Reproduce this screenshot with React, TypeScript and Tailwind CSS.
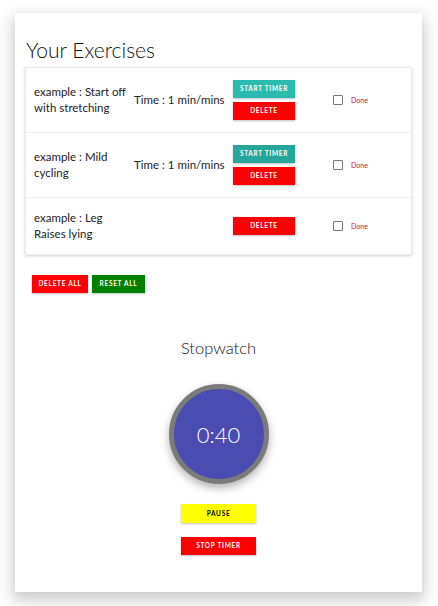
import React from "react";

const rows = [
  { name: ["example : Start off", "with stretching"], time: "Time : 1 min/mins", timer: true, h: "h-[65px]", teal: "bg-[#2bbbad]" },
  { name: ["example : Mild", "cycling"], time: "Time : 1 min/mins", timer: true, h: "h-[65px]", teal: "bg-[#26a69a]" },
  { name: ["example : Leg", "Raises lying"], time: "", timer: false, h: "h-[56px]", teal: "" },
];

const btn = "flex items-center justify-center text-white font-bold uppercase text-[6.5px] tracking-[0.7px] shadow-[0_1px_2px_rgba(0,0,0,0.25)]";

export default function App() {
  return (
    <div className="w-[438px] h-[606px] bg-white pt-[13px] px-[15px] [font-family:Lato,'Noto_Sans',sans-serif] text-[#222]">
      <div className="w-[407px] h-[579px] bg-white shadow-[0_6px_14px_2px_rgba(0,0,0,0.22)] px-[10px] flex flex-col">
        <h1 className="mt-[22px] ml-[1px] mb-[2px] text-[21px] leading-[30px] font-light text-[#111]">Your Exercises</h1>
        <div className="bg-white shadow-[0_1px_3px_rgba(0,0,0,0.18)] border border-[#ececec]">
          {rows.map((r, i) => (
            <div key={i} className={`${r.h} flex items-center pl-[8px] ${i < 2 ? "border-b border-[#f0f0f0]" : ""}`}>
              <div className="w-[100px] text-[11.5px] leading-[16px] text-[#222]">
                <div>{r.name[0]}</div>
                <div>{r.name[1]}</div>
              </div>
              <div className="w-[99px] text-[11.5px] leading-[16px] text-[#222]">{r.time}</div>
              <div className="w-[100px] flex flex-col gap-[4px]">
                {r.timer && <div className={`${btn} ${r.teal} w-[62px] h-[18px]`}>Start timer</div>}
                <div className={`${btn} bg-[#ff0000] w-[62px] h-[18px]`}>Delete</div>
              </div>
              <div className="flex items-center">
                <div className="w-[10px] h-[10px] border-[1.5px] border-[#777] rounded-[1px]" />
                <span className="ml-[8px] text-[7px] text-[#c4163a]">Done</span>
              </div>
            </div>
          ))}
        </div>
        <div className="flex gap-[4px] mt-[20px] ml-[7px]">
          <div className={`${btn} bg-[#ff0000] w-[56px] h-[18px]`}>Delete all</div>
          <div className={`${btn} bg-[#008000] w-[53px] h-[18px]`}>Reset all</div>
        </div>
        <div className="flex flex-col items-center">
          <div className="mt-[44px] text-[16.5px] leading-[22px] font-light text-[#111]">Stopwatch</div>
          <div className="mt-[25px] w-[100px] h-[100px] rounded-full bg-[#4a4cb2] border-[5px] border-[#7b7b7b] shadow-[0_4px_8px_rgba(0,0,0,0.3)] flex items-center justify-center text-white text-[22px] font-light">
            0:40
          </div>
          <div className={`${btn} !text-black bg-[#ffff00] w-[75px] h-[19px] mt-[20px]`}>Pause</div>
          <div className={`${btn} bg-[#ff0000] w-[75px] h-[18px] mt-[14px]`}>Stop timer</div>
        </div>
      </div>
    </div>
  );
}
